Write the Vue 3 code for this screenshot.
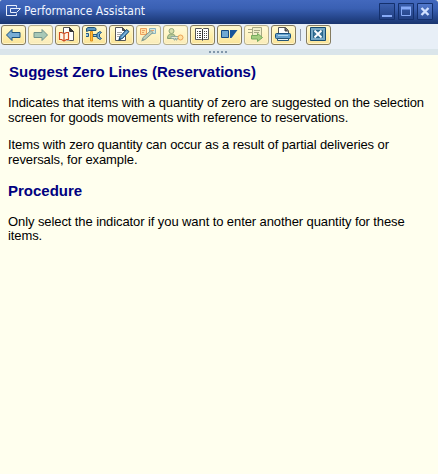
<script setup>
const tools = ['back', 'forward', 'document', 'technical', 'edit', 'customize', 'user', 'glossary', 'translate', 'export', 'print', 'close']
const disabled = ['forward', 'customize', 'user', 'export']
</script>

<template>
  <div class="window">
    <header class="titlebar">
      <svg class="logo" width="17" height="14" viewBox="0 0 17 14" fill="none" stroke="#e8effc">
        <path d="M11.500 3.500V1.500H1.500v10h10V9.500M5.500 4.500h10l-4 4h-6z" />
      </svg>
      <span class="title">Performance Assistant</span>
      <div class="controls">
        <span class="control"><svg width="16" height="17"><path d="M3 13h10" stroke="#86a9f5" stroke-width="2" /></svg></span>
        <span class="control"><svg width="16" height="17"><path d="M3.500 4v8.500h9V4" fill="none" stroke="#86a9f5" /><path d="M3 5h10" stroke="#86a9f5" stroke-width="3" /></svg></span>
        <span class="control bright"><svg width="16" height="17"><path d="M4.500 5l7 7M11.500 5l-7 7" stroke="#d0e0ff" stroke-width="2.400" /></svg></span>
      </div>
    </header>
    <nav class="toolbar">
      <template v-for="t in tools" :key="t">
        <span v-if="t === 'close'" class="separator"></span>
        <button class="tool" :class="{ disabled: disabled.includes(t) }">
          <svg width="23" height="18" viewBox="1 1 23 18" fill="none">
            <path v-if="t === 'back'" d="M5.500 10l5.500-5.500v3h8v5h-8v3z" fill="#78acd5" stroke="#1d527d" />
            <path v-else-if="t === 'forward'" d="M19.500 10l-5.500-5.500v3H6v5h8v3z" fill="#a7c8b7" stroke="#72938b" />
            <template v-else-if="t === 'document'">
              <path d="M8.500 8v-5.500h6l4 4v9h-10z" fill="#fff" stroke="#555" />
              <path d="M14.500 2.500v4h4z" fill="#333" stroke="#333" />
              <path d="M3.500 6.500h2l3.500 2 3.500-2h2v9h-2l-3.500 1-3.500-1h-2z" fill="#fff8e8" />
              <path d="M9 8.500l-2.500-1H4.500v7h2l2.500 1.500 2.500-1.500h2v-7h-2zV16" stroke="#cf4c20" stroke-width="1.200" />
            </template>
            <template v-else-if="t === 'technical'">
              <path d="M4 8.500h2.500v3H4" fill="#9cc6e0" stroke="#235a84" />
              <path d="M11 9.500h4v2h-4z" fill="#9cc6e0" stroke="#235a84" />
              <path d="M19.500 7.500l-1.500-1-3 2v4l3 2 1.500-1-2-1.500v-3z" fill="#78acd2" stroke="#235a84" />
              <path d="M8.500 6.500h2v9.500h-2z" fill="#ffbd37" stroke="#e0901d" />
              <path d="M4.500 3.500l1.500-1h6.500l1.500 1v2H7l-2.500 1z" fill="#5c96bd" stroke="#1f5278" />
            </template>
            <template v-else-if="t === 'edit'">
              <path d="M6.500 2.500h7l3 3v10h-10z" fill="#fff" stroke="#555" />
              <path d="M13.500 2.500v3h3" fill="#555" stroke="#444" />
              <path d="M8 7.500h5M8 9.500h4M8 11.500h3" stroke="#aaa" />
              <path d="M10 14.500l1-3 6.500-7 2.500 2-6.500 7z" fill="#5794c2" stroke="#164b76" />
              <path d="M12.500 12.500l5.500-6" stroke="#9acced" />
              <path d="M9 16l1.500-3 1.500 2z" fill="#174465" />
            </template>
            <template v-else-if="t === 'customize'">
              <path d="M4.500 3.500h6v6h-6z" fill="#ffe2a3" stroke="#eda05e" />
              <path d="M13.500 3.500h6v5h-6z" fill="#d7e7dd" stroke="#8ab4c1" />
              <path d="M6 5.500h3M6 7.500h2M15 5.500h3" stroke="#e8a169" />
              <path d="M6 15.500l1-3 8-7 2 2-8 7z" fill="#c0cfbb" stroke="#829b91" />
              <path d="M5 16.500l2-3 1.500 1.500z" fill="#829b91" />
            </template>
            <template v-else-if="t === 'user'">
              <path d="M4.500 13.500c0-3 1-4 3-4.500h2c2 .500 3 1.500 3 4.500z" fill="#b7c995" stroke="#829e74" />
              <circle cx="8.500" cy="6" r="2.500" fill="#d8dfac" stroke="#92a879" />
              <path d="M8 11.500h8v2h-2v1.500h-1v-1.500h-1v1.500h-1v-1.500H8z" fill="#e3ead5" stroke="#92aaa0" />
              <circle cx="17.500" cy="12.500" r="2.500" fill="#ffe2a2" stroke="#eba257" />
            </template>
            <template v-else-if="t === 'glossary'">
              <path d="M5.500 3.500h6l1 1 1-1h5v11h-5l-1 1-1-1h-6z" fill="#fff" stroke="#555" />
              <path d="M12.500 4v11" stroke="#333" />
              <path d="M7 6.500h1M9 6.500h2M7 8.500h1M9 8.500h2M7 10.500h1M9 10.500h2M7 12.500h1M9 12.500h2M14 6.500h1M16 6.500h1M14 8.500h1M16 8.500h1M14 10.500h1M16 10.500h1M14 12.500h1M16 12.500h1" stroke="#444" />
            </template>
            <template v-else-if="t === 'translate'">
              <path d="M4.500 5.500h7v7h-7z" fill="#6fa8d2" stroke="#164b82" />
              <path d="M13 5h7.500l-6 8H13z" fill="#17549a" />
            </template>
            <template v-else-if="t === 'export'">
              <path d="M8.500 2.500h9v11h-9z" fill="#f0efca" stroke="#a8a985" />
              <path d="M4 4.500h4M4 7.500h4M10 5.500h6M10 7.500h5" stroke="#a8a985" />
              <path d="M7.500 10.500h6v-2l5 4-5 4v-2.500h-6z" fill="#a4cd80" stroke="#75aa5e" />
            </template>
            <template v-else-if="t === 'print'">
              <path d="M7.500 8V2.500h7l3 3V8" fill="#fff" stroke="#555" />
              <path d="M14 2.500V6h3" fill="#555" stroke="#444" />
              <rect x="4.500" y="8.500" width="15" height="5" rx="1" fill="#65a0cc" stroke="#174f7d" />
              <path d="M7 10.500h10" stroke="#b2d9ee" />
              <path d="M6.500 13.500h11v2h-11z" fill="#e8f2f5" stroke="#245578" />
            </template>
            <template v-else>
              <path d="M4.500 2.500h15v13h-15z" fill="#76a8c5" stroke="#154b70" />
              <path d="M7.500 5.500h9v7h-9z" fill="#3b7699" stroke="#286488" />
              <path d="M8.500 5.500l7 7M15.500 5.500l-7 7" stroke="#fff" stroke-width="1.800" />
            </template>
          </svg>
        </button>
      </template>
    </nav>
    <div class="grip"><i v-for="n in 5" :key="n"></i></div>
    <main class="content">
      <h1>Suggest Zero Lines (Reservations)</h1>
      <p class="first">Indicates that items with a quantity of zero are suggested on the selection<br>screen for goods movements with reference to reservations.</p>
      <p>Items with zero quantity can occur as a result of partial deliveries or<br>reversals, for example.</p>
      <h2>Procedure</h2>
      <p class="last">Only select the indicator if you want to enter another quantity for these<br>items.</p>
    </main>
  </div>
</template>

<style>
body { margin: 0; background: #ffffee; }
</style>

<style scoped>
.window { width: 438px; height: 474px; overflow: hidden; background: #ffffee; font-family: "Liberation Sans", Arial, sans-serif; }
.titlebar { height: 24px; box-sizing: border-box; display: flex; padding-left: 5px; background: linear-gradient(#4268bd, #3a60b3 35%, #27488f 70%, #19356f); border-radius: 2px 3px 0 0; }
.logo { margin-top: 4px; flex: none; }
.title { margin-left: 2px; font: 12px/22px "DejaVu Sans Condensed", "DejaVu Sans", sans-serif; font-stretch: condensed; color: #f0f4ff; white-space: nowrap; }
.controls { display: flex; gap: 3px; margin: 3px 5px 0 auto; }
.control { width: 16px; height: 17px; box-sizing: border-box; display: flex; box-shadow: inset 0 0 0 1px #14306d; border-radius: 1px; background: linear-gradient(#3c61b0, #203e81); }
.control.bright { background: linear-gradient(#547bd0, #2e5098); }
.toolbar { height: 25px; box-sizing: border-box; padding: 1px 0 0 1px; display: flex; gap: 2px; background: #e8eff7; }
.tool { flex: none; width: 25px; height: 20px; box-sizing: border-box; padding: 0; border: 1px solid #847b60; border-radius: 3px; display: flex; background: linear-gradient(#fffbd4, #fff0ae 50%, #fae39a); box-shadow: inset 0 0 0 1px #fff5c9; }
.tool.disabled { border-color: #b5af91; background: linear-gradient(#fffbdc, #fff4c4 50%, #f9ebba); }
.separator { width: 1px; height: 12px; margin: 4px 3px 0 2px; background: #929baa; }
.grip { height: 6px; display: flex; justify-content: center; gap: 2px; background: #dae5ea; align-items: center; padding-right: 2px; box-sizing: border-box; }
.grip i { width: 2px; height: 2px; background: #8197aa; }
.content { padding: 8px 8px 0; color: #000; }
h1, h2 { color: #000080; font-size: 15px; line-height: 17px; margin: 0; white-space: nowrap; }
h1 { padding-left: 1px; letter-spacing: -0.02px; }
p { font-size: 13px; line-height: 15px; margin: 12px 0 0; white-space: nowrap; letter-spacing: -0.09px; }
p.first { margin-top: 15px; }
h2 { margin-top: 15px; }
p.last { margin-top: 16px; line-height: 14px; }
</style>
